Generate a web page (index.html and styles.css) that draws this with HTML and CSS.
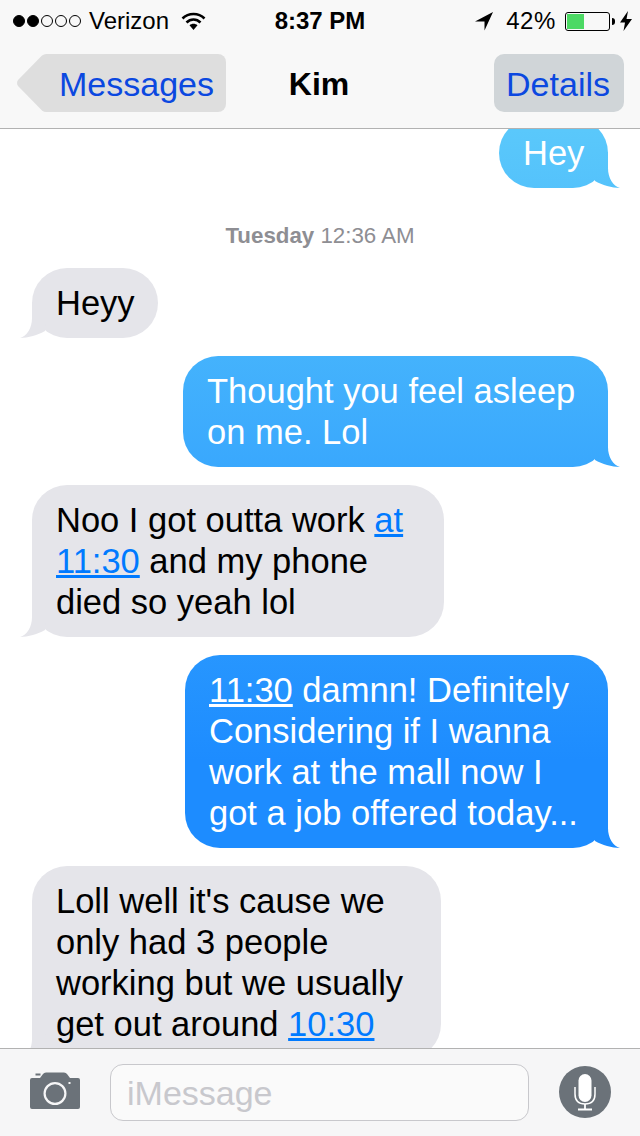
FILE: index.html
```html
<!DOCTYPE html>
<html lang="en">
<head>
<meta charset="utf-8">
<title>Kim</title>
<link rel="stylesheet" href="styles.css">
</head>
<body>
<div class="screen">
  <header class="top">
    <div class="status">
      <div class="status-left">
        <span class="signal"><i class="dot on"></i><i class="dot on"></i><i class="dot"></i><i class="dot"></i><i class="dot"></i></span>
        <span class="carrier">Verizon</span>
        <svg class="wifi" width="25" height="20" viewBox="0 0 25 20"><path d="M1.5 7.5C7.5 1.5 17.5 1.500 23.500 7.500" fill="none" stroke="#000" stroke-width="2.600"/><path d="M5.500 11.500C9.500 7.500 15.500 7.500 19.500 11.500" fill="none" stroke="#000" stroke-width="2.600"/><path d="M8.500 14.200C10.800 12.200 14.200 12.200 16.500 14.200L12.500 19Z" fill="#000"/></svg>
      </div>
      <div class="clock">8:37 PM</div>
      <div class="status-right">
        <svg class="arrow" width="20" height="20" viewBox="0 0 20 20"><path d="M19 1L1 10.500H10.500V19.500Z" fill="#000"/></svg>
        <span class="percent">42%</span>
        <span class="battery"><span class="charge"></span></span>
        <span class="nub"></span>
        <svg class="bolt" width="12" height="20" viewBox="0 0 12 20"><path d="M8 0L0 11.500H5L3.500 20L12 8H6.500Z" fill="#000"/></svg>
      </div>
    </div>
    <nav class="nav">
      <div class="nav-left"><a class="back">Messages</a></div>
      <div class="title">Kim</div>
      <div class="nav-right"><a class="details">Details</a></div>
    </nav>
  </header>
  <main class="thread">
    <div class="bubble out w-hey">Hey</div>
    <div class="time"><b>Tuesday</b> 12:36 AM</div>
    <div class="bubble in w-heyy">Heyy</div>
    <div class="bubble out w-thought">Thought you feel asleep<br>on me. Lol</div>
    <div class="bubble in w-noo">Noo I got outta work <a class="link">at<br>11:30</a> and my phone<br>died so yeah lol</div>
    <div class="bubble out w-damn"><a class="link-out">11:30</a> damnn! Definitely<br>Considering if I wanna<br>work at the mall now I<br>got a job offered today...</div>
    <div class="bubble in w-loll">Loll well it's cause we<br>only had 3 people<br>working but we usually<br>get out around <a class="link">10:30</a></div>
  </main>
  <footer class="composer">
    <svg class="camera" width="50" height="38" viewBox="0 0 50 38"><path fill-rule="evenodd" d="M2 6H10L13 2Q14 0.500 16 0.500H34Q36 0.500 37 2L40 6H48Q50 6 50 8V35Q50 37 48 37H2Q0 37 0 35V8Q0 6 2 6ZM25 10A11.500 11.500 0 1 0 25 33A11.500 11.500 0 1 0 25 10ZM25 12.200A9.300 9.300 0 1 1 25 30.800A9.300 9.300 0 1 1 25 12.200ZM38.500 10V12H40.500V10Z" fill="#6b7279"/><rect x="5.500" y="1.500" width="5" height="2" fill="#6b7279"/></svg>
    <div class="input">iMessage</div>
    <svg class="mic" width="52" height="52" viewBox="0 0 52 52"><circle cx="26" cy="26" r="26" fill="#6b7279"/><rect x="19.500" y="8" width="13" height="28" rx="6.500" fill="#fff"/><path d="M16 21V28C16 35 20 38 26 38C32 38 36 35 36 28V21" fill="none" stroke="#fff" stroke-width="1.500"/><path d="M26 38V43M19 43.500H33" stroke="#fff" stroke-width="1.800" fill="none"/></svg>
  </footer>
</div>
</body>
</html>
```
FILE: styles.css
```css
* { box-sizing: border-box; }
html, body { margin: 0; padding: 0; }
body { font-family: "Liberation Sans", Arial, sans-serif; background: #fff; color: #000; }
.screen { width: 640px; height: 1136px; display: flex; flex-direction: column; overflow: hidden; }

.top { flex: none; height: 129px; background: #f8f8f8; border-bottom: 1px solid #b2b2b2; }
.status { height: 40px; display: grid; grid-template-columns: 1fr auto 1fr; align-items: center; padding: 2px 8px 0 13px; font-size: 24px; }
.status-left { display: flex; align-items: center; }
.signal { display: flex; gap: 2px; margin-right: 8px; }
.dot { width: 12px; height: 12px; border-radius: 50%; border: 1px solid #000; }
.dot.on { background: #000; }
.wifi { margin-left: 12px; }
.clock { font-weight: 700; font-size: 24px; margin-right: 5px; }
.status-right { display: flex; align-items: center; justify-content: flex-end; }
.percent { margin-left: 12px; letter-spacing: .6px; }
.battery { margin-left: 9px; width: 45px; height: 19px; border: 1px solid #000; border-radius: 3px; padding: 1px; }
.charge { display: block; width: 17px; height: 100%; background: #4cd964; }
.nub { width: 3px; height: 7px; background: #000; border-radius: 0 3px 3px 0; margin-left: 2px; }
.bolt { margin-left: 5px; }

.nav { height: 88px; display: grid; grid-template-columns: 1fr auto 1fr; align-items: start; padding: 14px 16px 0; }
.nav-left { display: flex; }
.nav-right { display: flex; justify-content: flex-end; }
.back, .details { height: 58px; line-height: 61px; font-size: 34px; color: #0b48e0; }
.back { position: relative; margin-left: 32px; padding: 0 12px 0 11px; background: #dedede; border-radius: 0 8px 8px 0; }
.back::before { content: ""; position: absolute; left: -32px; top: 0; width: 33px; height: 58px; background: #dedede; clip-path: path("M33 0V58H30Q28 58 26 56.500L2 32Q0 29 2 26L26 1.500Q28 0 30 0Z"); }
.details { padding: 0 14px 0 12px; background: #d0d5d8; border-radius: 10px; }
.title { font-weight: 700; font-size: 32px; line-height: 61px; margin-right: 2px; }

.thread { flex: 1; min-height: 0; overflow: hidden; display: flex; flex-direction: column; gap: 18px; padding: 0 32px; }
.bubble { position: relative; flex: none; padding: 14.500px 0 14.500px 24px; font-size: 34.500px; line-height: 41px; border-radius: 35px; white-space: nowrap; }
.bubble.in { align-self: flex-start; background: #e5e5ea; }
.bubble.out { align-self: flex-end; color: #fff; background: linear-gradient(180deg, #5ac8fb 130px, #1d8cff 760px) fixed; }
.bubble::after { content: ""; position: absolute; bottom: 0; width: 26px; height: 36px; }
.bubble.out::after { right: -12px; background: linear-gradient(180deg, #5ac8fb 130px, #1d8cff 760px) fixed; clip-path: path("M14 0V16C14 26 19 34 26 36C18 36 8 33 1 29L0 0Z"); }
.bubble.in::after { left: -12px; background: #e5e5ea; clip-path: path("M12 0V16C12 26 7 34 0 36C8 36 18 33 25 29L26 0Z"); }

.w-hey { width: 109px; margin-top: -11px; }
.w-heyy { width: 126px; }
.w-thought { width: 425px; }
.w-noo { width: 412px; }
.w-damn { width: 423px; }
.w-loll { width: 409px; }

.time { flex: none; height: 28px; margin-top: 16px; line-height: 28px; text-align: center; font-size: 22.300px; color: #8e8e93; }
.link { color: #007aff; text-decoration: underline; }
.link-out { color: #fff; text-decoration: underline; }

.composer { flex: none; height: 88px; background: #f6f6f7; border-top: 1px solid #b2b2b2; display: flex; align-items: center; padding: 0 29px 0 30px; }
.camera { flex: none; margin-top: -4px; }
.input { flex: none; width: 419px; height: 57px; margin-left: 30px; padding-left: 16px; border: 1px solid #c8c8cc; border-radius: 13px; background: #fafafa; color: #c8c8cd; font-size: 34px; line-height: 56px; }
.mic { flex: none; margin-left: 30px; margin-top: -2px; }
```
